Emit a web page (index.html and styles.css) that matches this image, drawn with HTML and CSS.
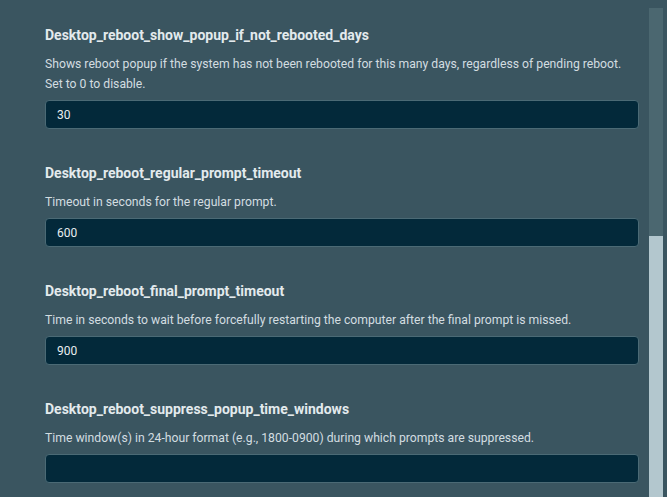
FILE: index.html
```html
<!DOCTYPE html>
<html lang="en">
<head>
  <meta charset="UTF-8">
  <title>Desktop reboot settings</title>
  <link rel="stylesheet" href="styles.css">
</head>
<body>
  <div class="panel">
    <div class="settings">
      <div class="field">
        <label class="field-name" for="popupDays">Desktop_reboot_show_popup_if_not_rebooted_days</label>
        <p class="field-desc">Shows reboot popup if the system has not been rebooted for this many days, regardless of pending reboot. Set to 0 to disable.</p>
        <input type="text" id="popupDays" class="field-input" value="30">
      </div>
      <div class="field">
        <label class="field-name" for="regularTimeout">Desktop_reboot_regular_prompt_timeout</label>
        <p class="field-desc">Timeout in seconds for the regular prompt.</p>
        <input type="text" id="regularTimeout" class="field-input" value="600">
      </div>
      <div class="field">
        <label class="field-name" for="finalTimeout">Desktop_reboot_final_prompt_timeout</label>
        <p class="field-desc">Time in seconds to wait before forcefully restarting the computer after the final prompt is missed.</p>
        <input type="text" id="finalTimeout" class="field-input" value="900">
      </div>
      <div class="field">
        <label class="field-name" for="suppressWindows">Desktop_reboot_suppress_popup_time_windows</label>
        <p class="field-desc">Time window(s) in 24-hour format (e.g., 1800-0900) during which prompts are suppressed.</p>
        <input type="text" id="suppressWindows" class="field-input" value="">
      </div>
    </div>
    <div class="scrollbar">
      <div class="scroll-thumb"></div>
    </div>
  </div>
</body>
</html>
```

FILE: styles.css
```css
body {
  margin: 0;
  padding: 0;
  height: 100vh;
  overflow: hidden;
  background-color: #3a5560;
  font-family: Roboto, "Liberation Sans", sans-serif;
  color: #dfe7ea;
}
.panel {
  display: flex;
  height: 100%;
}
.settings {
  flex: 1;
  padding: 26px 10px 0 45px;
}
.field {
  display: flex;
  flex-direction: column;
  margin-bottom: 35px;
}
.field-name {
  font-size: 14px;
  font-weight: bold;
  line-height: 18px;
  color: #e3eaed;
}
.field-desc {
  max-width: 586px;
  margin: 10px 0 6px;
  font-size: 12.2px;
  line-height: 20px;
  color: #d3dde0;
}
.field-input {
  box-sizing: border-box;
  height: 29px;
  padding: 0 11px;
  border: 1px solid #4b6a75;
  border-radius: 4px;
  background-color: #03293a;
  color: #e8eef0;
  font-family: Roboto, "Liberation Sans", sans-serif;
  font-size: 12px;
  outline: none;
}
.scrollbar {
  width: 14px;
  margin: 8px 4px 0 0;
  background-color: #4b6770;
  display: flex;
  flex-direction: column;
  justify-content: flex-end;
}
.scroll-thumb {
  height: 261px;
  background-color: #b3c7ce;
}
```
